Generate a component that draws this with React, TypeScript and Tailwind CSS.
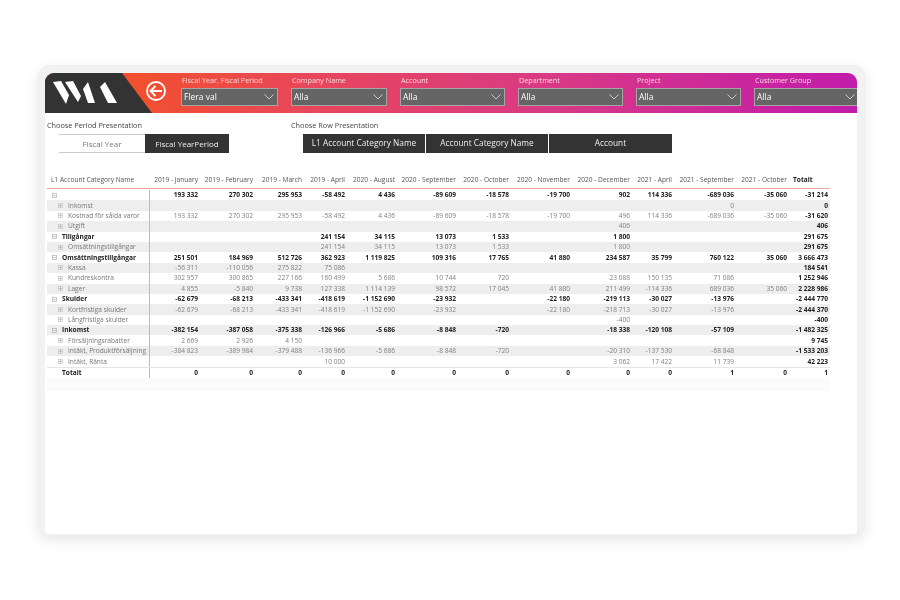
const COLS = [50, 55, 49, 43, 50, 61, 53, 61, 60, 42, 62, 53, 41];
const HEADS = [
  '2019 - January', '2019 - February', '2019 - March', '2019 - April', '2020 - August', '2020 - September',
  '2020 - October', '2020 - November', '2020 - December', '2021 - April', '2021 - September', '2021 - October',
];

type Row = { name: string; level: 0 | 1; vals: string[] };

const ROWS: Row[] = [
  { name: '', level: 0, vals: ['193 332', '270 302', '295 953', '-58 492', '4 436', '-89 609', '-18 578', '-19 700', '902', '114 336', '-689 036', '-35 060', '-31 214'] },
  { name: 'Inkomst', level: 1, vals: ['', '', '', '', '', '', '', '', '', '', '0', '', '0'] },
  { name: 'Kostnad för sålda varor', level: 1, vals: ['193 332', '270 302', '295 953', '-58 492', '4 436', '-89 609', '-18 578', '-19 700', '496', '114 336', '-689 036', '-35 060', '-31 620'] },
  { name: 'Utgift', level: 1, vals: ['', '', '', '', '', '', '', '', '406', '', '', '', '406'] },
  { name: 'Tillgångar', level: 0, vals: ['', '', '', '241 154', '34 115', '13 073', '1 533', '', '1 800', '', '', '', '291 675'] },
  { name: 'Omsättningstillgångar', level: 1, vals: ['', '', '', '241 154', '34 115', '13 073', '1 533', '', '1 800', '', '', '', '291 675'] },
  { name: 'Omsättningstillgångar', level: 0, vals: ['251 501', '184 969', '512 726', '362 923', '1 119 825', '109 316', '17 765', '41 880', '234 587', '35 799', '760 122', '35 060', '3 666 473'] },
  { name: 'Kassa', level: 1, vals: ['-56 311', '-110 056', '275 822', '75 086', '', '', '', '', '', '', '', '', '184 541'] },
  { name: 'Kundreskontra', level: 1, vals: ['302 957', '300 865', '227 166', '160 499', '5 686', '10 744', '720', '', '23 088', '150 135', '71 086', '', '1 252 946'] },
  { name: 'Lager', level: 1, vals: ['4 855', '-5 840', '9 738', '127 338', '1 114 139', '98 572', '17 045', '41 880', '211 499', '-114 336', '689 036', '35 060', '2 228 986'] },
  { name: 'Skulder', level: 0, vals: ['-62 679', '-68 213', '-433 341', '-418 619', '-1 152 690', '-23 932', '', '-22 180', '-219 113', '-30 027', '-13 976', '', '-2 444 770'] },
  { name: 'Kortfristiga skulder', level: 1, vals: ['-62 679', '-68 213', '-433 341', '-418 619', '-1 152 690', '-23 932', '', '-22 180', '-218 713', '-30 027', '-13 976', '', '-2 444 370'] },
  { name: 'Långfristiga skulder', level: 1, vals: ['', '', '', '', '', '', '', '', '-400', '', '', '', '-400'] },
  { name: 'Inkomst', level: 0, vals: ['-382 154', '-387 058', '-375 338', '-126 966', '-5 686', '-8 848', '-720', '', '-18 338', '-120 108', '-57 109', '', '-1 482 325'] },
  { name: 'Försäljningsrabatter', level: 1, vals: ['2 669', '2 926', '4 150', '', '', '', '', '', '', '', '', '', '9 745'] },
  { name: 'Intäkt, Produktförsäljning', level: 1, vals: ['-384 823', '-389 984', '-379 488', '-136 966', '-5 686', '-8 848', '-720', '', '-20 310', '-137 530', '-68 848', '', '-1 533 203'] },
  { name: 'Intäkt, Ränta', level: 1, vals: ['', '', '', '10 000', '', '', '', '', '3 062', '17 422', '11 739', '', '42 223'] },
];

const TOTALS = ['0', '0', '0', '0', '0', '0', '0', '0', '0', '0', '1', '0', '1'];
const SLICERS = [
  { label: 'Fiscal Year, Fiscal Period', value: 'Flera val', w: 'w-[97px]', gap: 'ml-0' },
  { label: 'Company Name', value: 'Alla', w: 'w-[96px]', gap: 'ml-[13px]' },
  { label: 'Account', value: 'Alla', w: 'w-[105px]', gap: 'ml-[13px]' },
  { label: 'Department', value: 'Alla', w: 'w-[105px]', gap: 'ml-[13px]' },
  { label: 'Project', value: 'Alla', w: 'w-[105px]', gap: 'ml-[13px]' },
  { label: 'Customer Group', value: 'Alla', w: 'w-[105px]', gap: 'ml-[13px]' },
];

function Chevron() {
  return (
    <svg width="10" height="6" viewBox="0 0 10 6" className="shrink-0">
      <path d="M0.5 0.5 L5 5 L9.5 0.5" fill="none" stroke="#e6e6e6" strokeWidth="0.8" />
    </svg>
  );
}

function Expander({ open, faint }: { open?: boolean; faint?: boolean }) {
  return (
    <svg width="5" height="5" viewBox="0 0 5 5" className="shrink-0">
      <rect x="0.5" y="0.5" width="4" height="4" fill="none" stroke={faint ? '#c4c4c4' : '#b0b0b0'} strokeWidth="0.7" />
      <path d={open ? 'M1.2 2.5 H3.8' : 'M1.2 2.5 H3.8 M2.5 1.2 V3.8'} stroke="#9a9a9a" strokeWidth="0.6" />
    </svg>
  );
}

function Logo() {
  return (
    <svg width="107" height="40" viewBox="0 0 107 40" className="absolute left-0 top-0">
      <polygon points="0,0 77,0 107,40 0,40" fill="#333333" />
      <g fill="#ffffff">
        <polygon points="8,9 16,8 24,22 21,31" />
        <polygon points="20,9 28,8 36,23 33,29" />
        <polygon points="38,16 43,9 50,30 43,30" />
        <polygon points="55,14 60,9 72,30 63,30" />
      </g>
    </svg>
  );
}

export default function App() {
  return (
    <div className="w-[900px] h-[600px] overflow-hidden bg-white pt-[65px] pl-[38px] font-['Open_Sans',sans-serif]">
      <div className="w-[827px] h-[471px] rounded-[12px] bg-[#f2f2f2] border border-[#eeeeee] shadow-[0_4px_14px_rgba(0,0,0,0.1)] px-[6px] pt-[7px]">
        <div className="h-[461px] w-[812px] bg-white rounded-t-[9px] rounded-b-[4px] overflow-hidden blur-[0.25px]">
          {/* Header band */}
          <div className="relative h-[40px] flex bg-[linear-gradient(90deg,#f2502c_10%,#e8475a_32%,#d83a85_62%,#c21bab_100%)]">
            <Logo />
            <div className="ml-[100px] w-[36px] pt-[7px] shrink-0">
              <svg width="22" height="22" viewBox="0 0 22 22">
                <circle cx="11" cy="11" r="9" fill="none" stroke="#fff" strokeWidth="1.8" />
                <path d="M17 11 H5.5 M10.5 6 L5.5 11 L10.5 16" fill="none" stroke="#fff" strokeWidth="1.8" />
              </svg>
            </div>
            {SLICERS.map((s) => (
              <div key={s.label} className={`${s.w} ${s.gap} shrink-0 pt-[2px]`}>
                <div className="text-[7.2px] leading-[10px] text-[#fbdada] whitespace-nowrap pl-[1px]">{s.label}</div>
                <div className="mt-[3px] h-[18px] bg-[#656565] border border-[#a9a3a5] flex items-center justify-between pl-[2px] pr-[3px] text-[8.5px] text-white">
                  <span>{s.value}</span>
                  <Chevron />
                </div>
              </div>
            ))}
          </div>

          {/* Presentation toggles */}
          <div className="flex pl-[2px] pt-[7px]">
            <div className="w-[244px] shrink-0">
              <div className="text-[7.3px] leading-[10px] text-[#444]">Choose Period Presentation</div>
              <div className="flex ml-[12px] mt-[4px] h-[19px] text-[8px]">
                <div className="w-[86px] flex items-center justify-center text-[#777] border-y border-[#ccc]">Fiscal Year</div>
                <div className="w-[84px] flex items-center justify-center bg-[#333] text-[#eee]">Fiscal YearPeriod</div>
              </div>
            </div>
            <div>
              <div className="text-[7.3px] leading-[10px] text-[#444]">Choose Row Presentation</div>
              <div className="flex ml-[12px] mt-[4px] h-[19px] text-[8.3px] text-[#eee] gap-[1px]">
                <div className="w-[122px] flex items-center justify-center bg-[#333]">L1 Account Category Name</div>
                <div className="w-[122px] flex items-center justify-center bg-[#333]">Account Category Name</div>
                <div className="w-[123px] flex items-center justify-center bg-[#333]">Account</div>
              </div>
            </div>
          </div>

          {/* Matrix */}
          <div className="ml-[2px] mt-[17px] w-[783px] text-[6.6px] bg-[#fbfbfb] pb-[13px]">
            <div className="bg-white">
              <div className="flex h-[19px] items-center pt-[1px] border-b border-[#eba99c] text-[#555] whitespace-nowrap">
                <div className="w-[103px] shrink-0 pl-[4px]">L1 Account Category Name</div>
                {HEADS.map((h, i) => (
                  <div key={h} style={{ width: COLS[i] }} className="shrink-0 flex justify-end pr-[2px]">
                    {h}
                  </div>
                ))}
                <div style={{ width: COLS[12] }} className="shrink-0 pl-[4px] font-bold text-[#222]">Totalt</div>
              </div>
              <div className="pt-[1px]">
                {ROWS.map((r, i) => (
                  <div key={i} className={`flex h-[10.4px] items-center whitespace-nowrap ${i % 2 === 1 || i === 13 ? 'bg-[#eeeeee]' : 'bg-white'}`}>
                    <div className={`w-[103px] shrink-0 h-full flex items-center border-r border-[#eba99c] ${r.level === 0 ? 'pl-[5px]' : 'pl-[11px]'}`}>
                      <Expander open={r.level === 0} faint={r.level === 1} />
                      <span className={r.level === 0 ? 'ml-[5px] font-bold text-[#222]' : 'ml-[5px] text-[#777]'}>{r.name}</span>
                    </div>
                    {r.vals.map((v, j) => (
                      <div
                        key={j}
                        style={{ width: COLS[j] }}
                        className={`shrink-0 flex justify-end pr-[2px] ${r.level === 0 || j === 12 ? 'font-bold text-[#222]' : 'text-[#808080]'}`}
                      >
                        {v}
                      </div>
                    ))}
                  </div>
                ))}
              </div>
              <div className="flex h-[11px] items-center border-t border-[#e6e6e6] font-bold text-[#222] whitespace-nowrap">
                <div className="w-[103px] shrink-0 h-full flex items-center border-r border-[#eba99c] pl-[15px]">Totalt</div>
                {TOTALS.map((v, j) => (
                  <div key={j} style={{ width: COLS[j] }} className="shrink-0 flex justify-end pr-[2px]">
                    {v}
                  </div>
                ))}
              </div>
            </div>
          </div>
        </div>
      </div>
    </div>
  );
}
